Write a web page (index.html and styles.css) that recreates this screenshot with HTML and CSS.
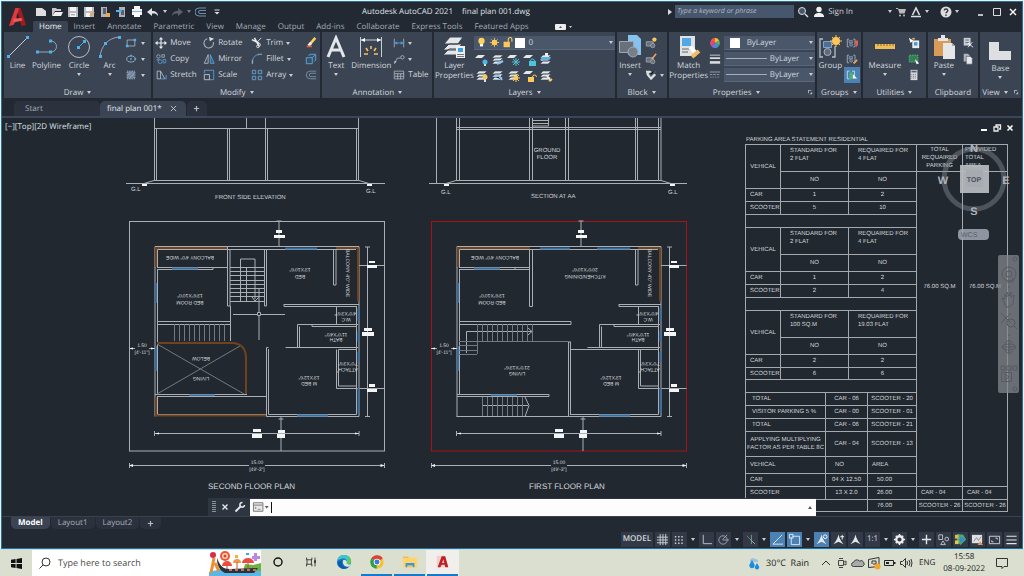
FILE: index.html
```html
<!DOCTYPE html>
<html lang="en">
<head>
<meta charset="utf-8">
<title>Autodesk AutoCAD 2021 - final plan 001.dwg</title>
<link rel="stylesheet" href="styles.css">
</head>
<body>
<svg class="defs" aria-hidden="true">
  <defs>
    <symbol id="sheets" viewBox="0 0 14 14"><path fill="#e4e6e8" stroke="#3b4453" stroke-width=".6" d="M1 11l3-3h8l-3 3zM1 8l3-3h8L9 8zM1 5l3-3h8L9 5z"/></symbol>
    <symbol id="bracket" viewBox="0 0 14 14"><path fill="none" stroke="#aab2bc" d="M3.500 2.500h-2v9h2M8.500 2.500h2v9h-2"/><path fill="#526984" stroke="#8fa5c0" stroke-width=".7" d="M3.500 4h4v3h-4z"/><circle cx="6" cy="9" r="1.800" fill="#526984" stroke="#8fa5c0" stroke-width=".7"/></symbol>
    <symbol id="bigA" viewBox="0 0 14 14"><path fill="#e6e9ec" d="M7 1.500C8 6 10 9.500 12.500 12L7 9.500 1.500 12C4 9.500 6 6 7 1.500z"/></symbol>
  </defs>
</svg>
<div class="app">
  <header class="head">
    <button class="logo" aria-label="Application menu"><svg viewBox="0 0 20 24"><path fill="#9e1c1f" d="M8 2h5l6 19-5 1-3-8z"/><path fill="#e0383b" d="M7 2h4L9 13l-4 8-5 1z"/><path fill="#f0585a" d="M5 14l9-1 1 3-10 2z"/><path fill="#222933" d="M9.500 7l2 6H8z"/></svg></button>
    <div class="head-rows">
      <div class="titlebar">
        <div class="quick">
          <button aria-label="New"><svg viewBox="0 0 12 12"><path fill="#dedede" d="M1 2h6l4 3v5H1z"/></svg></button>
          <button aria-label="Open"><svg viewBox="0 0 12 12"><path fill="#c8c8c8" d="M1 10V2h4l1 1h4v2H4z"/><path fill="#eee" d="M4 6h8l-2 4H1z"/></svg></button>
          <button aria-label="Save"><svg viewBox="0 0 12 12"><path fill="#b9bdc2" d="M1 1h10v10H1z"/><path fill="#f4f4f4" d="M3 1h6v4H3zM3 7h6v4H3z"/><path fill="#666" d="M4 8.500h4v.7H4z"/></svg></button>
          <button aria-label="Save as"><svg viewBox="0 0 12 12"><path fill="#b9bdc2" d="M1 1h10v10H1z"/><path fill="#f4f4f4" d="M3 1h6v4H3zM3 7h4v4H3z"/><path stroke="#e8a860" stroke-width="2" d="M7 10l4-4"/></svg></button>
          <button aria-label="Open from web"><svg viewBox="0 0 12 12"><path fill="#aeb3b9" d="M2 1h6v10H2z"/><path fill="#59616d" d="M4 2h3v6H4z"/><path fill="#efa94a" d="M7 7h4v4H7z"/></svg></button>
          <button aria-label="Save to web"><svg viewBox="0 0 12 12"><path fill="#aeb3b9" d="M4 1h6v10H4z"/><path fill="#59616d" d="M6 4h3v5H6z"/><path fill="#58b2ea" d="M1 4h3V2l3 3-3 3V6H1z"/></svg></button>
          <button aria-label="Plot"><svg viewBox="0 0 12 12"><path fill="#f4f4f4" d="M3 0h6v3H3zM1 3h10v6H1z"/><path fill="#8fb8de" d="M1 5h10v1H1z"/><path fill="#fff" d="M3 7h6v4H3z"/></svg></button>
          <button aria-label="Undo"><svg viewBox="0 0 12 12"><path fill="#e2e4e6" d="M0 6l5-4v3c4 0 6 2 6 5C9 7.500 8 7.500 5 7.500V10z"/></svg></button>
          <i class="caret"></i>
          <button aria-label="Redo"><svg viewBox="0 0 12 12"><path fill="#58616c" d="M12 6L7 2v3c-4 0-6 2-6 5 2-2.500 3-2.500 6-2.500V10z"/></svg></button>
          <i class="caret dim"></i>
          <button aria-label="Offset"><svg viewBox="0 0 12 12"><path fill="none" stroke="#7090b0" d="M11 2H4a4 4 0 000 8h7M11 4.500H5a1.500 1.500 0 000 3h6"/></svg></button>
          <button aria-label="Customize"><svg viewBox="0 0 12 12"><path fill="#ddd" d="M3.500 3.500h5v1h-5zM3.500 6h5L6 8.500z"/></svg></button>
        </div>
        <h1 class="title"><span>Autodesk AutoCAD 2021</span><span>final plan 001.dwg</span></h1>
        <div class="account">
          <i class="caret side"></i>
          <input class="keyword" aria-label="Type a keyword or phrase" placeholder="Type a keyword or phrase">
          <button aria-label="Search"><svg viewBox="0 0 12 12"><circle cx="5" cy="5" r="3.500" fill="#46566c" stroke="#ddd"/><path stroke="#ddd" stroke-width="1.400" d="M8 8l3 3"/></svg></button>
          <button class="sign"><svg viewBox="0 0 12 12"><circle cx="6" cy="3.500" r="2.700" fill="#f0f0f0"/><path fill="#f0f0f0" d="M1 11c0-3 2-4 5-4s5 1 5 4z"/></svg>Sign In</button>
          <i class="caret"></i>
          <button aria-label="Store"><svg viewBox="0 0 12 12"><path fill="#bbb" d="M1 2h2l.5 1H11L9.500 7.500h-5L3 3H1z"/><circle cx="5" cy="9.500" r="1" fill="#bbb"/><circle cx="9" cy="9.500" r="1" fill="#bbb"/></svg></button>
          <button aria-label="Autodesk apps"><svg viewBox="0 0 12 12"><path fill="none" stroke="#ddd" stroke-width="1.600" d="M1 10.500h10M2.500 9L6 2l3.500 7"/></svg></button>
          <i class="caret"></i>
          <button class="help" aria-label="Help"><svg viewBox="0 0 12 12"><circle cx="6" cy="6" r="5.500" fill="#ddd"/><path fill="none" stroke="#333b46" stroke-width="1.400" d="M4.200 4.500c0-2 3.600-2 3.600 0C7.800 6 6 5.700 6 7.300M6 8.500V10"/></svg></button>
          <i class="caret"></i>
        </div>
        <div class="window">
          <button aria-label="Minimize"><svg viewBox="0 0 12 12"><path stroke="#fff" stroke-width="1.400" d="M3 9h5"/></svg></button>
          <button aria-label="Maximize"><svg viewBox="0 0 12 12"><path fill="none" stroke="#ddd" d="M2.500 2.500h7v7h-7z"/></svg></button>
          <button aria-label="Close"><svg viewBox="0 0 12 12"><path stroke="#fff" stroke-width="1.400" d="M3 3l6 6M9 3L3 9"/></svg></button>
        </div>
      </div>
      <nav class="menus">
        <button class="on">Home</button><button>Insert</button><button>Annotate</button><button>Parametric</button><button>View</button><button>Manage</button><button>Output</button><button>Add-ins</button><button>Collaborate</button><button>Express Tools</button><button>Featured Apps</button>
        <button class="mini" aria-label="Minimize ribbon"><svg viewBox="0 0 18 8"><rect y="1" width="11" height="6" rx="1" fill="#eee"/><path fill="#555" d="M4 5h3L5.500 3z"/><path fill="#ccc" d="M14 3h3l-1.500 2z"/></svg></button>
      </nav>
    </div>
  </header>

  <main class="ribbon">
    <section class="panel draw">
      <div class="tools">
        <button class="big"><svg viewBox="0 0 24 24"><path stroke="#ccd1d8" d="M2 22L22 2"/><path fill="#4db1f0" d="M1 20h3v3H1zM20 1h3v3h-3z"/></svg>Line</button>
        <button class="big"><svg viewBox="0 0 24 24"><path fill="none" stroke="#9ba4b2" d="M2 17h14a5.500 5.500 0 000-11"/><path fill="#4db1f0" d="M1 15.500h3v3H1zM14 15.500h3v3h-3zM14 4.500h3v3h-3z"/></svg>Polyline</button>
        <button class="big"><svg viewBox="0 0 24 24"><circle cx="12" cy="12" r="10.500" fill="none" stroke="#b6bdc7"/><path stroke="#4db1f0" d="M12 12l6-6"/><path fill="#4db1f0" d="M10 11h3v3h-3zM16 5h3v3h-3z"/></svg>Circle<i class="caret"></i></button>
        <button class="big"><svg viewBox="0 0 24 24"><path fill="none" stroke="#9ba4b2" d="M2 22C3 11 10 3 21 2"/><path fill="#4db1f0" d="M1 20h3v3H1zM6 7h3v3H6zM20 1h3v3h-3z"/></svg>Arc<i class="caret"></i></button>
        <div class="stack">
          <button aria-label="Rectangle"><svg viewBox="0 0 14 14"><path fill="none" stroke="#aab2bc" d="M2.500 3.500h9v7h-9z"/><path fill="#4db1f0" d="M1 9h3v3H1zM10 2h3v3h-3z"/></svg><i class="caret"></i></button>
          <button aria-label="Ellipse"><svg viewBox="0 0 14 14"><ellipse cx="7" cy="7" rx="5" ry="3.500" fill="none" stroke="#aab2bc"/><path fill="#4db1f0" d="M6 6h2v2H6zM11 6h2v2h-2zM6 2h2v2H6z"/></svg><i class="caret"></i></button>
          <button aria-label="Hatch"><svg viewBox="0 0 14 14"><path fill="#7187a5" d="M3 3h8v8H3z"/><path stroke="#c6ced8" stroke-dasharray="1 1" fill="none" d="M2.500 2.500h9v9h-9zM3 8l5-5M5 11l6-6"/></svg><i class="caret"></i></button>
        </div>
      </div>
      <button class="label">Draw<i class="caret"></i></button>
    </section>

    <section class="panel modify">
      <div class="tools modgrid">
        <button><svg viewBox="0 0 14 14"><path stroke="#e8eaed" stroke-width="1.300" d="M7 2v10M2 7h10"/><path fill="#e8eaed" d="M7 0l2.500 3h-5zM7 14l2.500-3h-5zM0 7l3-2.500v5zM14 7l-3-2.500v5z"/></svg>Move</button>
        <button><svg viewBox="0 0 14 14"><path fill="none" stroke="#aeb7c2" stroke-width="1.300" d="M5 2a5.500 5.500 0 107 4"/><path fill="#ddd" d="M7 0l6 2-5 3z"/></svg>Rotate</button>
        <button><svg viewBox="0 0 14 14"><path stroke="#e8eaed" stroke-width="1.800" d="M4 1l5 9M1 3l8 4"/><path fill="none" stroke="#e8eaed" d="M9 7a2 2 0 110 4zM12 1L7 6"/><circle cx="8" cy="11" r="1.500" fill="none" stroke="#e8eaed"/></svg>Trim<i class="caret"></i></button>
        <button aria-label="Erase"><svg viewBox="0 0 14 14"><path stroke="#ffd05c" stroke-width="3" d="M12 1L6 8"/><path stroke="#f3f3f3" stroke-width="3" d="M7 7l-3 3"/><path stroke="#e25d4e" stroke-width="2" d="M2 11h6"/></svg></button>
        <button><svg viewBox="0 0 14 14"><g fill="none" stroke="#9aabc0"><circle cx="4" cy="4" r="2"/><path d="M8 2h3v3H8zM2 8h3"/></g><g fill="none" stroke="#5799cc"><circle cx="6" cy="10" r="2.300"/><path d="M9.500 7.500h3v4h-3z"/></g></svg>Copy</button>
        <button><svg viewBox="0 0 14 14"><path fill="none" stroke="#b9c0c9" d="M6 2v10H1.500z"/><path fill="#355e85" stroke="#60a5da" d="M8.500 2v10H13z"/></svg>Mirror</button>
        <button><svg viewBox="0 0 14 14"><path fill="none" stroke="#60a5da" d="M2 12V9a7 7 0 017-7"/><path stroke="#aeb7c2" d="M1.500 13V8M8 1.500h5"/></svg>Fillet<i class="caret"></i></button>
        <button aria-label="Explode"><svg viewBox="0 0 14 14"><path fill="#34506b" stroke="#6cacdb" d="M1.500 5.500h7v7h-7zM4 3l2-1.500h6.500V8L11 10M8.500 5.500l3-3"/></svg></button>
        <button><svg viewBox="0 0 14 14"><path fill="none" stroke="#b9c0c9" d="M2.500 2.500h4v9h-4zM6.500 2.500l5 9"/><path fill="none" stroke="#5aa2d8" d="M7 11.500h6V7"/></svg>Stretch</button>
        <button><svg viewBox="0 0 14 14"><path fill="none" stroke="#5aa2d8" d="M1.500 5V1.500h11v11H7"/><path fill="none" stroke="#c6ccd4" d="M1.500 6.500h6v6h-6z"/></svg>Scale</button>
        <button><svg viewBox="0 0 14 14"><path fill="#34506b" stroke="#6fa2ca" d="M1.500 1.500h4v4h-4zM8.500 1.500h4v4h-4zM1.500 8.500h4v4h-4zM8.500 8.500h4v4h-4z"/></svg>Array<i class="caret"></i></button>
        <button aria-label="Offset"><svg viewBox="0 0 14 14"><path fill="none" stroke="#8095ad" d="M13 2.500H6a4.500 4.500 0 000 9h7M13 5H7a2 2 0 000 4h6"/></svg></button>
      </div>
      <button class="label">Modify<i class="caret"></i></button>
    </section>

    <section class="panel annotation">
      <div class="tools">
        <button class="big"><svg viewBox="0 0 24 24"><path fill="none" stroke="#e4e7ea" stroke-width="3" d="M4 22L12 3l8 19M7 15h10"/></svg>Text<i class="caret"></i></button>
        <button class="big"><svg viewBox="0 0 24 24"><path fill="none" stroke="#c9ced6" d="M1.500 2v20M22.500 2v20M2 5h20"/><path fill="#fff" d="M2 5l4-2v4zM22 5l-4-2v4z"/><path stroke="#f5c162" stroke-width="1.600" d="M12 11v3M7 13l2 3M17 13l-2 3M5 19h4M15 19h4"/></svg>Dimension</button>
        <div class="stack">
          <button aria-label="Linear"><svg viewBox="0 0 14 14"><path stroke="#aab2bc" d="M1.500 2v10M12.500 2v10"/><path stroke="#4d9fdd" d="M2 7h10"/><path fill="#4d9fdd" d="M2 7l3-2v4zM12 7L9 5v4z"/></svg><i class="caret"></i></button>
          <button aria-label="Leader"><svg viewBox="0 0 14 14"><path fill="none" stroke="#aab2bc" d="M2 12l3-6h4"/><circle cx="11" cy="5" r="2" fill="none" stroke="#aab2bc"/><path fill="#ccc" d="M1 13l1-4 2 1z"/></svg><i class="caret"></i></button>
          <button><svg viewBox="0 0 14 14"><path fill="none" stroke="#aab2bc" d="M1.500 2.500h11v9h-11zM2 5.500h11M2 8.500h11M5.500 5v7M9 5v7"/></svg>Table</button>
        </div>
      </div>
      <button class="label">Annotation<i class="caret"></i></button>
    </section>

    <section class="panel layers">
      <div class="tools">
        <button class="big"><svg viewBox="0 0 24 24"><path fill="#e4e6e8" stroke="#3b4453" d="M1 20l6-6h13l-5 6zM1 15l6-6h13l-5 6zM2 9l6-7h13l-5 7z"/><path fill="#eee" d="M14 11h9v12h-9z"/><path fill="#3e9fde" d="M16 13h5v4h-5z"/><path stroke="#777" d="M15 19.500h7M15 21.500h7"/></svg>Layer<br>Properties</button>
        <div class="layer-side">
          <div class="combo">
            <svg viewBox="0 0 14 14"><circle cx="7" cy="5" r="4" fill="#ffd35b"/><path fill="#fff" d="M5 9h4v3H5z"/></svg>
            <svg viewBox="0 0 14 14"><circle cx="7" cy="7" r="3.500" fill="#ffc95a"/><path stroke="#ffc95a" d="M7 1v12M1 7h12M3 3l8 8M11 3l-8 8"/></svg>
            <svg viewBox="0 0 14 14"><path fill="#ffc95a" d="M2 6h8v7H2z"/><path fill="none" stroke="#ffc95a" stroke-width="1.400" d="M8 6V3a2.300 2.300 0 014.600 0v3"/></svg>
            <i class="swatch"></i>
            <select aria-label="Layer"><option>0</option></select><i class="caret"></i>
          </div>
          <div class="layer-grid">
            <button aria-label="Off"><svg viewBox="0 0 14 14"><path fill="#e4e6e8" d="M0 5l3-3h7L7 5z"/><circle cx="10" cy="9" r="2.500" fill="#50b7e6"/><path fill="#ddd" d="M9 11h2v2H9z"/></svg></button>
            <button aria-label="Isolate"><svg viewBox="0 0 14 14"><use href="#sheets"/><path stroke="#8dc8f0" stroke-width="2" d="M6 11l6-3"/></svg></button>
            <button aria-label="Freeze"><svg viewBox="0 0 14 14"><path fill="#e4e6e8" d="M0 5l3-3h7L7 5z"/><path stroke="#4fc2d8" d="M9 5v8M5 9h8M6 6l6 6M12 6l-6 6"/></svg></button>
            <button aria-label="Lock"><svg viewBox="0 0 14 14"><path fill="#e4e6e8" d="M0 5l3-3h7L7 5z"/><path fill="#4dc3da" d="M6 8h7v5H6z"/><path fill="none" stroke="#4dc3da" d="M7.500 8a2 2 0 014 0"/></svg></button>
            <button aria-label="Make current"><svg viewBox="0 0 14 14"><use href="#sheets"/><path fill="#5bb0e7" d="M3 4h9l-2 3H1z"/><path fill="#eee" d="M6 0h3v3H6z"/></svg></button>
            <button aria-label="Turn all on"><svg viewBox="0 0 14 14"><use href="#sheets"/><circle cx="10" cy="8" r="2.500" fill="#ffc95a"/><path fill="#ddd" d="M9 10h2v3H9z"/></svg></button>
            <button aria-label="Unisolate"><svg viewBox="0 0 14 14"><use href="#sheets"/><path stroke="#8dc8f0" stroke-width="2" d="M3 7h5l3 4"/></svg></button>
            <button aria-label="Thaw"><svg viewBox="0 0 14 14"><use href="#sheets"/><circle cx="9" cy="9" r="2" fill="#ffc95a"/><path stroke="#ffc95a" d="M9 5v8M5 9h8M6 6l6 6M12 6l-6 6"/></svg></button>
            <button aria-label="Unlock"><svg viewBox="0 0 14 14"><path fill="#e4e6e8" d="M0 5l3-3h7L7 5z"/><path fill="#ffc95a" d="M5 8h6v5H5z"/><path fill="none" stroke="#ffc95a" d="M9.500 8a2 2 0 014 0"/></svg></button>
            <button aria-label="Match layer"><svg viewBox="0 0 14 14"><use href="#sheets"/><path stroke="#eee" stroke-width="2" d="M8 7l4 5"/><path stroke="#ffc95a" stroke-width="2" d="M10 12l3-2"/></svg></button>
          </div>
        </div>
      </div>
      <button class="label">Layers<i class="caret"></i></button>
    </section>

    <section class="panel block">
      <div class="tools">
        <button class="big"><svg viewBox="0 0 24 24"><path fill="#86c2ee" d="M10 0h9l4 4v16H10z"/><path fill="#68707b" stroke="#a0a7b0" d="M1.500 6.500h14v11h-14z"/><circle cx="15" cy="17" r="5" fill="#777f89" stroke="#a0a7b0"/></svg>Insert<i class="caret"></i></button>
        <div class="stack">
          <button aria-label="Create block"><svg viewBox="0 0 14 14"><path fill="#68707b" stroke="#a0a7b0" d="M1.500 5.500h8v5h-8z"/><circle cx="9" cy="10" r="2.500" fill="#68707b" stroke="#a0a7b0"/><circle cx="11" cy="3" r="2.500" fill="#ffc95a"/></svg></button>
          <button aria-label="Edit block"><svg viewBox="0 0 14 14"><path fill="#68707b" stroke="#a0a7b0" d="M1.500 5.500h8v5h-8z"/><circle cx="9" cy="10" r="2.500" fill="#68707b" stroke="#a0a7b0"/><path stroke="#f5a15a" stroke-width="1.800" d="M13 1L8 7"/></svg></button>
          <button aria-label="Edit attributes"><svg viewBox="0 0 14 14"><path fill="#dcdfe2" d="M1 2h5l7 5-6 6-5-6z"/><path stroke="#525a66" stroke-width="1.800" d="M5 5l2 3 6-6"/></svg><i class="caret"></i></button>
        </div>
      </div>
      <button class="label">Block<i class="caret"></i></button>
    </section>

    <section class="panel properties">
      <div class="tools">
        <button class="big"><svg viewBox="0 0 24 24"><path fill="#dfe1e3" d="M3 1h15v20H3z"/><path fill="#50a9e6" d="M5 3h9v8H5z"/><path stroke="#666" d="M5 14h9M5 17h6"/><path stroke="#fff" stroke-width="4" d="M13 12l6 6"/><path stroke="#f3bd5d" stroke-width="4" d="M15 22l7-6"/></svg>Match<br>Properties</button>
        <div class="props">
          <svg viewBox="0 0 14 14"><path fill="#ef5847" d="M7 7V1a6 6 0 00-5 3z"/><path fill="#f6b73c" d="M7 7V1a6 6 0 015 3z"/><path fill="#58b65b" d="M7 7l5-3a6 6 0 010 6z"/><path fill="#3a94dc" d="M7 7l5 3a6 6 0 01-5 3z"/><path fill="#9d60bf" d="M7 7v6a6 6 0 01-5-3z"/><path fill="#dd4c87" d="M7 7l-5 3a6 6 0 010-6z"/></svg>
          <div class="combo color"><i class="swatch"></i><select aria-label="Object color"><option>ByLayer</option></select><i class="caret"></i></div>
          <svg viewBox="0 0 14 14"><path stroke="#dadde0" d="M1 2.500h12"/><path stroke="#dadde0" stroke-width="2" d="M1 6h12"/><path stroke="#dadde0" stroke-width="3" d="M1 11h12"/></svg>
          <div class="combo"><i class="rule"></i><select aria-label="Lineweight"><option>ByLayer</option></select><i class="caret"></i></div>
          <svg viewBox="0 0 14 14"><path stroke="#a0a7b0" d="M1 3.500h12"/><path stroke="#a0a7b0" stroke-dasharray="3 1" d="M1 6.500h12"/><path stroke="#a0a7b0" stroke-dasharray="1 1" d="M1 9.500h12"/></svg>
          <div class="combo"><i class="rule"></i><select aria-label="Linetype"><option>ByLayer</option></select><i class="caret"></i></div>
        </div>
      </div>
      <div class="label-row"><button class="label">Properties<i class="caret"></i></button><button class="launch" aria-label="Open properties palette"><svg viewBox="0 0 6 6"><path fill="#b5bcc6" d="M0 0h4v1H1v3H0zM5 2v3H2z"/></svg></button></div>
    </section>

    <section class="panel groups">
      <div class="tools">
        <button class="big"><svg viewBox="0 0 24 24"><path fill="none" stroke="#b6bdc7" stroke-width="1.300" d="M5 4H2v18h3M14 22h3V11"/><path fill="#536d8c" stroke="#78a4cf" d="M5.500 6.500h8v6h-8z"/><circle cx="9.500" cy="17" r="3.500" fill="#5e6b7d" stroke="#aab2bc"/><circle cx="18" cy="6" r="4" fill="#ffc55a"/><path stroke="#ffc55a" d="M18 0v12M12 6h12M14 2l8 8M22 2l-8 8"/></svg>Group</button>
        <div class="stack">
          <button aria-label="Ungroup"><svg viewBox="0 0 14 14"><use href="#bracket"/><path fill="#e75b55" d="M10 4h4v5l-2 3z"/></svg></button>
          <button aria-label="Group edit"><svg viewBox="0 0 14 14"><use href="#bracket"/><path stroke="#f3a35b" stroke-width="2" d="M9 12l4-4"/></svg></button>
          <button class="lit" aria-label="Group selection"><svg viewBox="0 0 14 14"><path fill="none" stroke="#cfe0ee" d="M4 2.500H1.500v9H4M7 2.500h3v6"/><path fill="#4bb474" d="M4 4h4v8H4z"/><path fill="#fff" d="M8 6l5 5H8z"/></svg></button>
        </div>
      </div>
      <button class="label">Groups<i class="caret"></i></button>
    </section>

    <section class="panel utilities">
      <div class="tools">
        <button class="big"><svg viewBox="0 0 24 24"><path fill="#f0bd59" d="M2 9h20v5H2z"/><path stroke="#8a6a2e" d="M5 9v2M8 9v2M11 9v2M14 9v2M17 9v2M20 9v2"/></svg>Measure<i class="caret"></i></button>
        <div class="stack">
          <button aria-label="Select all"><svg viewBox="0 0 14 14"><path fill="#e9edf1" d="M5 4h8v9H5z"/><path fill="#4799d4" d="M7 6h4v4H7z"/><path fill="#fff" d="M1 1l5 3-3 3z"/><path fill="#f3a35b" d="M5 1h3v2H5z"/></svg></button>
          <button aria-label="Quick select"><svg viewBox="0 0 14 14"><path fill="#357f55" stroke="#55bb81" stroke-dasharray="2 1" d="M1.500 2.500h10v8h-10z"/><path fill="#fff" d="M8 7l5 5-3 1z"/></svg></button>
          <button aria-label="Calculator"><svg viewBox="0 0 14 14"><path fill="#d8dadd" d="M3 1h8v12H3z"/><path fill="#59616c" d="M4 2h6v2H4z"/><path stroke="#59616c" stroke-dasharray="1 1" d="M4 6.500h6M4 8.500h6M4 10.500h6"/></svg></button>
        </div>
      </div>
      <button class="label">Utilities<i class="caret"></i></button>
    </section>

    <section class="panel clipboard">
      <div class="tools">
        <button class="big"><svg viewBox="0 0 24 24"><path fill="#d99b58" d="M2 4h17v17H2z"/><path fill="#e5e6e8" d="M6 6V3h3V0h4v3h3v3zM11 8h9l3 3v13H11z"/><path fill="#aaa" d="M20 8l3 3h-3z"/></svg>Paste<i class="caret"></i></button>
        <div class="stack">
          <button aria-label="Cut"><svg viewBox="0 0 14 14"><path fill="#cbd0d6" d="M2 1h8v9H2z"/><path stroke="#59616c" d="M4 3.500h4M4 6.500h4"/><path stroke="#fff" d="M7 7l6 5M12 6l-5 6"/></svg></button>
          <button aria-label="Copy clip"><svg viewBox="0 0 14 14"><path fill="#aeb4bb" d="M2 1h5l2 2v7H2z"/><path fill="#e6e8ea" stroke="#3b4453" stroke-width=".6" d="M5 4h5l2 2v7H5z"/></svg></button>
        </div>
      </div>
      <div class="label">Clipboard</div>
    </section>

    <section class="panel view">
      <div class="tools">
        <button class="big base"><svg viewBox="0 0 24 24"><path fill="#dddfe2" d="M1 4h10v9h12v9H1z"/></svg>Base<i class="caret"></i></button>
      </div>
      <div class="label-row"><button class="label">View<i class="caret"></i></button><button class="launch" aria-label="Open view settings"><svg viewBox="0 0 6 6"><path fill="#b5bcc6" d="M0 0h4v1H1v3H0zM5 2v3H2z"/></svg></button></div>
    </section>
  </main>

  <nav class="files">
    <button class="file start">Start</button>
    <div class="file on"><button>final plan 001*</button><button class="x" aria-label="Close drawing"><svg viewBox="0 0 8 8"><path stroke="#c8cdd4" d="M1 1l6 6M7 1L1 7"/></svg></button></div>
    <button class="file add" aria-label="New drawing"><svg viewBox="0 0 8 8"><path stroke="#b4bac3" stroke-width="1.400" d="M4 1v6M1 4h6"/></svg></button>
  </nav>

  <div class="canvas">
    <svg class="drawing" viewBox="2 118 1020 397" preserveAspectRatio="xMidYMin meet">
      <defs>
        <!-- dimensions and rooms common to both floors -->
        <g id="floor">
          <g class="ln">
            <path d="M279 221v26M276.500 221h5M276.500 246.500h5M359 265.500h25.500M359 388.500h25.500M367.500 247v169M365 247h5M365 416.500h5M154.500 433.500h204.500M154.500 431v5M359 431v5M281 417v34M278.500 419h5M129 465.500h120M265 465.500h119.500M129.500 463v5M384.500 463v5M129 348.500h6M149 348.500h6"/>
            <path d="M157.500 269.500V394M155 267.500V396M157 267.500h56v2h-56M157 321.500h74M157 324.500h74M359 246.500V416.500H266.500M356.500 306V414.500H268.500V349M333.500 249.500V285h2.500V249.500M336.500 306v9h-2M336.500 315v9M297.500 347v-22.500H358M299.500 347v-20.500M312 324v2.500H357M285.500 347.500H358M336.500 349.500V388.500H359M338.500 349.500V372h-1.500M338.500 349.500h18V386H338.500V372M155 246.500H359M155 246.500V268M157.500 249.500V267M157.500 249.500H356M155 396V416.500M155 394.500h92"/>
          </g>
          <g class="win"><path d="M172 268.500h26M156 283v20M156 346v25M189 395.500h26M297 415.500h31M358.500 308v13M358.500 331v11M358.500 352v10M358.500 388v25"/></g>
          <g class="wood"><path d="M155 248h73M156 247v20M336 248h22M358 248v53"/></g>
          <g class="tag"><path d="M276 230h6v3h-6zM274 235h11v3h-11zM369 261h6v2h-6zM367 265h10v3h-10zM364 328h8v3h-8zM362 332h12v4h-12zM369 384h6v3h-6zM367 389h10v3h-10zM253 429h8v3h-8zM252 434h10v4h-10zM278 430h7v3h-7zM277 434h8v4h-8z"/>
          <path d="M129 465.500l4-1.500v3zM384.500 465.500l-4-1.500v3zM129 348.500l4-1v2zM155 348.500l-4-1v2zM155 433.500l4-1v2zM359 433.500l-4-1v2z"/></g>
        </g>
      </defs>

      <g class="ln">
        <path d="M154.500 118v63M156.500 128v53M154 128.500h205M227.500 129v52M229.500 129v52M246.500 118v10M265.500 118v63M267.500 129v52M356.500 128v53M358.500 118v63M154 180.500h205M126 183.500h259M144 183.500l10-3M369 183.500l-10-3"/>
        <path d="M436.500 118v65M434 183.500h5M456.500 118v63M459.500 118v63M456 127.500h205M456 129.500h205M529.500 118v63M532.500 118v63M565.500 118v63M568.500 118v63M635.500 118v63M637.500 118v63M658.500 118v63M661 118v63M456 180.500h205M429 183.500h258M446 183.500l10-3M671 183.500l-10-3M533 120.500h16M533 123.500h16M548.500 118v8h-16"/>
      </g>
      <path class="tag" d="M142 184h5v2h-5zM367 184h5v2h-5zM444 184h5v2h-5zM670 184h5v2h-5z"/>

      <rect class="ln" x="129.500" y="221.500" width="255" height="229.500"/>
      <rect class="red" x="431.500" y="221.500" width="255" height="229.500"/>
      <use href="#floor"/>
      <use href="#floor" x="302"/>

      <!-- second floor: stairwell, void and balcony -->
      <g class="ln">
        <path d="M227.500 247v59h2.500V249.500M264.500 249.500V306h2V249.500M230 267.500h34M230 271.500h34M230 275.500h34M230 280.500h34M230 284.500h34M230 288.500h34M230 292.500h34M230 296.500h34M230 301.500h34M240.500 301v-42h14.500v40M246.500 267v34M252 297l3 4 4-4M213 267.500h14M284 304.500h75M284 306.500h72M284 304v2.500M230.500 306v35M266.500 416.500V347.500h2M157.500 396.500H266M157.500 396V414.500H266"/>
        <path class="thin" d="M174.500 324v17M179.500 324v17M184.500 324v17M189.500 324v17M194.500 324v17M199.500 324v17M204.500 324v17M209.500 324v17M214.500 324v17M219.500 324v17M224.500 324v17M157 344l87 50M157 394l83-48"/>
        <path d="M233 314.500h24M261 314.500h24M259 288v24M259 316v24M257.500 312.500h3v3h-3z"/>
      </g>
      <g class="wood"><path d="M157 343h77q12 2 12 15v36M156 397v19M155 415.500h111"/></g>
      <path class="win" d="M285 248.500h32"/>

      <!-- first floor: stairs and living room -->
      <g class="ln">
        <path d="M529.500 249v57.500h3V249.500M514.500 267.500h15M514.500 269.500h15M619 304.500h42M619 306.500h40M619 304v2.500M533 321.500h38v3h-38M568.500 342V416.500M570.500 342v73M568 342h3M570 349.500h89M547 394.500h2v2h-92M456.500 416.500h112M466.500 353V331.500H532M528 328l4 3.500-4 3.500M482 405.500h46M525 397l4 8.500-4 11"/>
        <path class="thin" d="M477.500 324v30M482.500 324v17M487.500 324v17M492.500 324v17M497.500 324v17M502.500 324v17M507.500 324v17M512.500 324v17M517.500 324v17M522.500 324v17M527.500 324v17M532.500 324v17M459 341.500h109M459 345.500h18M459 350.500h18M459 354.500h18M482.500 397v19M487.500 397v19M492.500 397v19M497.500 397v19M502.500 397v19M507.500 397v19M512.500 397v19M517.500 397v19M522.500 397v19"/>
      </g>
      <path class="win" d="M540 248.500h30M597 248.500h33"/>

      <g class="cad">
        <text x="131" y="191">G.L</text><text x="366" y="193">G.L</text><text x="215" y="199">FRONT SIDE ELEVATION</text>
        <text x="441" y="194">G.L</text><text x="668" y="194">G.L</text><text x="531" y="198">SECTION AT AA</text>
        <text x="547" y="152" text-anchor="middle">GROUND</text><text x="547" y="159" text-anchor="middle">FLOOR</text>
        <text x="746" y="141">PARKING AREA STATEMENT RESIDENTIAL</text>
      </g>
      <g class="cap"><text x="208" y="489">SECOND FLOOR PLAN</text><text x="529" y="489">FIRST FLOOR PLAN</text></g>
      <g class="dim">
        <text x="257" y="464">15.00</text><text x="257" y="471">[49'-3"]</text><text x="142" y="347">1.50</text><text x="142" y="354">[4'-11"]</text>
        <text x="559" y="464">15.00</text><text x="559" y="471">[49'-3"]</text><text x="444" y="347">1.50</text><text x="444" y="354">[4'-11"]</text>
      </g>
      <g class="room">
        <text transform="translate(190 256) rotate(180)">BALCONY 4'0" WIDE</text>
        <text transform="translate(190 301) rotate(180)">BED ROOM</text><text transform="translate(190 294) rotate(180)">13'6"X10'0"</text>
        <text transform="translate(300 275) rotate(180)">BED</text><text transform="translate(300 268) rotate(180)">13'X10'6"</text>
        <text transform="translate(346 273) rotate(90)">BALCONY 4'0" WIDE</text>
        <text transform="translate(346 318) rotate(180)">W.C</text><text transform="translate(346 312) rotate(180)">4'0"X3'6"</text>
        <text transform="translate(336 338) rotate(180)">BATH</text><text transform="translate(336 333) rotate(180)">11'0"X4'0"</text>
        <text transform="translate(348 368) rotate(180)">ATTACH</text><text transform="translate(348 362) rotate(180)">7'0"X3'6"</text>
        <text transform="translate(309 382) rotate(180)">M BED</text><text transform="translate(309 376) rotate(180)">13'X12'6"</text>
        <text transform="translate(201 357) rotate(180)">BELOW</text><text transform="translate(201 377) rotate(180)">LIVING</text>
        <text transform="translate(495 256) rotate(180)">BALCONY 4'0" WIDE</text>
        <text transform="translate(492 301) rotate(180)">BED ROOM</text><text transform="translate(492 294) rotate(180)">13'6"X10'0"</text>
        <text transform="translate(585 275) rotate(180)">KITCHEN/DINING</text><text transform="translate(585 268) rotate(180)">20'0"X10'6"</text>
        <text transform="translate(648 273) rotate(90)">BALCONY 4'0" WIDE</text>
        <text transform="translate(648 318) rotate(180)">W.C</text><text transform="translate(648 312) rotate(180)">4'0"X3'6"</text>
        <text transform="translate(638 338) rotate(180)">BATH</text><text transform="translate(638 333) rotate(180)">11'0"X4'0"</text>
        <text transform="translate(650 368) rotate(180)">ATTACH</text><text transform="translate(650 362) rotate(180)">7'0"X3'6"</text>
        <text transform="translate(611 382) rotate(180)">M BED</text><text transform="translate(611 376) rotate(180)">13'X12'6"</text>
        <text transform="translate(517 372) rotate(180)">LIVING</text><text transform="translate(517 366) rotate(180)">21'0"X13'6"</text>
      </g>

      <foreignObject x="745" y="144" width="264" height="372">
        <table class="parking">
          <colgroup><col class="c35"><col class="c45"><col class="c23"><col class="c19"><col class="c49"><col class="c46"><col class="c45"></colgroup>
          <tr class="h27"><th rowspan="2">VEHICAL</th><th colspan="2" class="lead">STANDARD FOR<br>2 FLAT</th><th colspan="2" class="lead">REQUAIRED FOR<br>4 FLAT</th><th class="tot">TOTAL<br>REQUAIRED<br>PARKING</th><th class="lead2">PROVIDED<br>TOTAL<br>AREA</th></tr>
          <tr class="h17"><td colspan="2">NO</td><td colspan="2">NO</td><td rowspan="20" class="area">76.00 SQ.M</td><td rowspan="20" class="area">76.00 SQ.M</td></tr>
          <tr class="h13"><td class="l">CAR</td><td colspan="2">1</td><td colspan="2">2</td></tr>
          <tr class="h13"><td class="l">SCOOTER</td><td colspan="2">5</td><td colspan="2">10</td></tr>
          <tr class="h13"><td colspan="5"></td></tr>
          <tr class="h27"><th rowspan="2">VEHICAL</th><th colspan="2" class="lead">STANDARD FOR<br>2 FLAT</th><th colspan="2" class="lead">REQUAIRED FOR<br>4 FLAT</th></tr>
          <tr class="h17"><td colspan="2">NO</td><td colspan="2">NO</td></tr>
          <tr class="h13"><td class="l">CAR</td><td colspan="2">1</td><td colspan="2">2</td></tr>
          <tr class="h13"><td class="l">SCOOTER</td><td colspan="2">2</td><td colspan="2">4</td></tr>
          <tr class="h13"><td colspan="5"></td></tr>
          <tr class="h27"><th rowspan="2">VEHICAL</th><th colspan="2" class="lead">STANDARD FOR<br>100 SQ.M</th><th colspan="2" class="lead">REQUAIRED FOR<br>19.03 FLAT</th></tr>
          <tr class="h17"><td colspan="2">NO</td><td colspan="2">NO</td></tr>
          <tr class="h13"><td class="l">CAR</td><td colspan="2">2</td><td colspan="2">2</td></tr>
          <tr class="h12"><td class="l">SCOOTER</td><td colspan="2">6</td><td colspan="2">6</td></tr>
          <tr class="h13"><td colspan="5"></td></tr>
          <tr class="h13"><td colspan="2" class="l in">TOTAL</td><td colspan="2">CAR - 06</td><td>SCOOTER - 20</td></tr>
          <tr class="h13"><td colspan="2" class="l in">VISITOR PARKING 5 %</td><td colspan="2">CAR - 00</td><td>SCOOTER - 01</td></tr>
          <tr class="h13"><td colspan="2" class="l in">TOTAL</td><td colspan="2">CAR - 06</td><td>SCOOTER - 21</td></tr>
          <tr class="h25"><td colspan="2">APPLYING MULTIPLYING<br>FACTOR AS PER TABLE 8C</td><td colspan="2">CAR - 04</td><td>SCOOTER - 13</td></tr>
          <tr class="h17"><td colspan="2" class="l">VEHICAL</td><td colspan="2" class="l wide">NO</td><td class="l">AREA</td></tr>
          <tr class="h13"><td colspan="2" class="l">CAR</td><td colspan="2">04 X 12.50</td><td class="l wide">50.00</td></tr>
          <tr class="h13"><td colspan="2" class="l">SCOOTER</td><td colspan="2">13 X 2.0</td><td class="l wide">26.00</td><td class="l">CAR - 04</td><td class="l">CAR - 04</td></tr>
          <tr class="h12"><td colspan="4"></td><td class="l wide">76.00</td><td>SCOOTER - 26</td><td>SCOOTER - 26</td></tr>
        </table>
      </foreignObject>

      <!-- view cube -->
      <circle cx="974" cy="179" r="30" fill="none" stroke="#8b929c" stroke-opacity=".42" stroke-width="5"/>
      <path fill="#b9bcc0" fill-opacity=".92" d="M960 165h29v28h-29z"/><path fill="#a6aab1" d="M966 170h17v17h-17z"/>
      <g class="cube"><text x="974" y="152">N</text><text x="943" y="184">W</text><text x="1006" y="184">E</text><text x="974" y="215">S</text></g>
      <text class="top" x="974" y="182">TOP</text>
      <rect x="958" y="229" width="31" height="11" rx="4" fill="#a2a8b4" fill-opacity=".85"/><text class="wcs" x="961" y="237">WCS</text>

      <!-- navigation bar -->
      <rect x="998" y="255" width="21" height="138" rx="2" fill="#81858c" fill-opacity=".75"/>
      <g fill="none" stroke="#565b63">
        <circle cx="1015" cy="259" r="2"/><circle cx="1009" cy="274" r="7"/><circle cx="1009" cy="274" r="3"/><path d="M1013 278v4h-6M1009 286v2"/>
        <path d="M1004 302l-2-4 3 1v-5l2 3v-5l2 4 2-4v5l3-2-1 9-4 3h-3zM1001 313l10 10M1011 313l-10 10"/><circle cx="1011" cy="323" r="4"/><path d="M1014 326l3 3M1009 334v2M1002 347h14M1009 340v14M1005 343l4-3 4 3M1005 351l4 3 4-3"/><ellipse cx="1009" cy="347" rx="7" ry="3"/><path d="M1001 366h4v4h-4zM1007 366h4v4h-4zM1013 366h4v4h-4zM1001.500 372.500h10v9h-10zM1005 374l4 3-4 3z"/><circle cx="1015" cy="389" r="2"/>
      </g>
    </svg>

    <div class="viewport"><button>[−]</button><button>[Top]</button><button>[2D Wireframe]</button></div>
    <div class="window view-window">
      <button aria-label="Minimize drawing"><svg viewBox="0 0 12 12"><path stroke="#fff" stroke-width="2" d="M3 8h6"/></svg></button>
      <button aria-label="Restore drawing"><svg viewBox="0 0 12 12"><path fill="none" stroke="#eee" stroke-width="1.300" d="M3 5h4v4H3zM5 4.500V3h4.500v4H8"/></svg></button>
      <button aria-label="Close drawing"><svg viewBox="0 0 12 12"><path stroke="#fff" stroke-width="1.600" d="M3.500 3.500l5 5M8.500 3.500l-5 5"/></svg></button>
    </div>
    <div class="command">
      <i class="grip"></i>
      <button aria-label="Close command line"><svg viewBox="0 0 12 12"><path stroke="#e4e6e8" stroke-width="1.400" d="M3.500 3.500l5 5M8.500 3.500l-5 5"/></svg></button>
      <button aria-label="Customize command line"><svg viewBox="0 0 12 12"><path stroke="#e4e6e8" stroke-width="2" d="M1.500 10.500L7 5"/><path fill="none" stroke="#e4e6e8" stroke-width="1.600" d="M8.500 1.500a2.300 2.300 0 102 2.500"/></svg></button>
      <label class="entry"><svg viewBox="0 0 20 12"><path fill="#e8e8e8" stroke="#777" d="M1.500 1.500h10v9h-10zM2 4h9"/><path fill="none" stroke="#777" stroke-width=".8" d="M3 6l1.500 1L3 8M6 8.500h3"/><path fill="#555" d="M13.500 5h4l-2 2.500z"/></svg><i class="cursor"></i><input aria-label="Command"><i class="caret up"></i></label>
    </div>
  </div>

  <footer>
    <nav class="layouts"><button class="on">Model</button><button>Layout1</button><button>Layout2</button><button class="plus" aria-label="New layout"><svg viewBox="0 0 8 8"><path stroke="#b4bac3" stroke-width="1.400" d="M4 1v6M1 4h6"/></svg></button></nav>
    <div class="status">
      <button class="modelspace">MODEL</button>
      <button aria-label="Grid"><svg viewBox="0 0 14 14"><path stroke="#cfd4da" d="M4.500 1v12M7.500 1v12M10.500 1v12M1 4.500h12M1 7.500h12M1 10.500h12"/></svg></button>
      <button aria-label="Snap"><svg viewBox="0 0 14 14"><path stroke="#cfd4da" stroke-width="1.500" stroke-dasharray="1.500 2" d="M2 4h10M2 7.500h10M2 11h10"/></svg></button><i class="caret"></i>
      <button aria-label="Ortho"><svg viewBox="0 0 14 14"><path fill="none" stroke="#c0c6cd" d="M3.500 2v9.500H13"/></svg></button>
      <button aria-label="Polar"><svg viewBox="0 0 14 14"><circle cx="6.500" cy="7.500" r="4.500" fill="none" stroke="#9ca5b0"/><path stroke="#9ca5b0" d="M6 7.500h7M6 7l5-5"/></svg></button><i class="caret"></i>
      <button aria-label="Isodraft"><svg viewBox="0 0 14 14"><path stroke="#5aa98b" d="M8 2v10"/><path stroke="#bb6262" d="M3 3l5 5"/><path stroke="#aaa" d="M7 7l5 5"/></svg></button><i class="caret"></i>
      <button class="lit" aria-label="Object tracking"><svg viewBox="0 0 14 14"><path fill="none" stroke="#dce9f5" d="M12 2L2 12h11"/></svg></button>
      <button class="lit" aria-label="Object snap"><svg viewBox="0 0 14 14"><path fill="none" stroke="#dce9f5" d="M4.500 3.500h8v9h-9v-8"/><path fill="none" stroke="#dce9f5" d="M1.500 1.500h4v4h-4z"/></svg></button><i class="caret"></i>
      <button class="lit" aria-label="Annotation visibility"><svg viewBox="0 0 14 14"><use href="#bigA"/><circle cx="11" cy="4" r="2" fill="none" stroke="#fff"/></svg></button>
      <button aria-label="Auto scale"><svg viewBox="0 0 14 14"><use href="#bigA"/><path stroke="#fff" d="M11 2v5M9 4h4"/></svg></button>
      <button aria-label="Annotation scale"><svg viewBox="0 0 14 14"><use href="#bigA"/></svg></button>
      <button class="scale">1:1</button><i class="caret"></i>
      <button aria-label="Workspace"><svg viewBox="0 0 14 14"><circle cx="7" cy="7" r="3.500" fill="none" stroke="#eee" stroke-width="2.500"/><path stroke="#eee" stroke-width="1.600" d="M7 1v2M7 11v2M1 7h2M11 7h2M3 3l1 1M10 10l1 1M11 3l-1 1M3 11l1-1"/></svg></button><i class="caret"></i>
      <button aria-label="Annotation monitor"><svg viewBox="0 0 14 14"><path stroke="#e4e6e8" stroke-width="1.500" d="M7 2v10M2 7h10"/></svg></button>
      <button aria-label="Isolate objects"><svg viewBox="0 0 14 14"><g fill="none" stroke="#c0c6cd"><path d="M2 2h4v5H2zM4 12.500l2.500-4 2.500 4z"/><circle cx="10.500" cy="6.500" r="2"/></g></svg></button>
      <button aria-label="Graphics performance"><svg viewBox="0 0 14 14"><path fill="#44ad77" d="M3 1l7 1 3 5-6 6-4-4z"/><path fill="#3b87d3" d="M6 4l6 2-5 5z"/><path fill="#efb04b" d="M1 2h4v4H1z"/><path fill="#e6c553" d="M1 8h4v4H1z"/></svg></button>
      <button aria-label="Hardware"><svg viewBox="0 0 14 14"><path fill="#dee0e2" d="M1 2h11v9H1z"/><path fill="none" stroke="#888" d="M3 9l3-4 2 3 3-4"/><path fill="#ee905a" d="M10 9l3 4H7z"/></svg></button>
      <button class="clean" aria-label="Clean screen"><svg viewBox="0 0 14 14"><path fill="none" stroke="#cfd4da" d="M1.500 3.500h11v8h-11zM4 8v1.500h2M8 5.500h2V7"/></svg></button>
      <button aria-label="Customize status bar"><svg viewBox="0 0 14 14"><path stroke="#e4e6e8" stroke-width="1.200" d="M1.500 3.500h11M1.500 7.500h11M1.500 11.500h11"/></svg></button>
    </div>
  </footer>
</div>

<div class="taskbar">
  <button class="win-start" aria-label="Start"><svg viewBox="0 0 12 12"><path fill="#111" d="M0 2l5-1v4.500H0zM6 1l6-1v5.500H6zM0 6.500h5V11l-5-1zM6 6.500h6V12l-6-1z"/></svg></button>
  <label class="search"><svg class="lens" viewBox="0 0 12 12"><circle cx="7" cy="5" r="4" fill="none" stroke="#333"/><path stroke="#333" d="M4 8l-3.500 3.500"/></svg><input placeholder="Type here to search" aria-label="Type here to search">
    <svg class="art" viewBox="0 0 52 26" preserveAspectRatio="none"><path fill="#5bb7e8" d="M0 22l12-3 15 2 25-2v7H0z"/><path fill="#6bb344" d="M36 14l8 1 8-2v8H34z"/><path fill="#253442" d="M8 8c3 8 6 11 13 11l28-1-4 5H16c-6-3-8-8-8-15z"/><circle cx="16" cy="6" r="5" fill="#ef5739"/><circle cx="16" cy="6" r="3" fill="#fbd5b5"/><circle cx="16" cy="6" r="1.500" fill="#d94332"/><path fill="#e94e40" d="M13 16a5 5 0 0110 0zM33 13a6 5 0 0112 0z"/><path fill="#f09a45" d="M24 13a4 4 0 018 0z"/><path stroke="#b85035" d="M18 15v4M28 12v7M39 13v6"/><path stroke="#ee8e32" stroke-width="3" d="M5 8L2 23M6 13l4 8"/><circle cx="4" cy="5" r="3" fill="#dc2b48"/><path fill="#bd86e3" d="M45 3h3v3h3v3h-3v2h-3V9h-2V6h2z"/><path fill="#3fa9e3" d="M37 3h3v2h-3z"/><path fill="#efb13a" d="M26 5h3v3h-3z"/><path stroke="#e46a3c" stroke-width="2" stroke-dasharray="3 3" d="M20 20h27"/></svg>
  </label>
  <div class="pins">
    <button aria-label="Cortana"><svg viewBox="0 0 18 18"><circle cx="9" cy="9" r="4.500" fill="none" stroke="#111" stroke-width="1.600"/></svg></button>
    <button aria-label="Task view"><svg viewBox="0 0 18 18"><path fill="none" stroke="#333" d="M4 4v2.500h6V4M4 14v-2.500h6V14M4.500 6v6M9.500 6v6M13.500 4v10"/><path fill="#333" d="M12.500 7h2v3h-2z"/></svg></button>
    <button aria-label="Edge"><svg viewBox="0 0 18 18"><circle cx="9" cy="9" r="8" fill="#1878c7"/><path fill="#3ec5c8" d="M1.500 8C2 3 5 1 9 1c5 0 8 3 8 7 0 3-2 4-5 3 1-4-1-6-4-6-3 0-5 1-6.500 3z"/><path fill="#68c84c" d="M13 3c3 1 4 3 4 5 0 3-2 4-5 3 2-3 2-6 1-8z"/><path fill="#0c5ba6" d="M7 7c-2 5 1 9 7 8-5 4-12 0-12-5 1-2 3-3 5-3z"/><path fill="#dde8d8" d="M8 7c3-1 5 1 4 4 2 1 4 1 5 0-1 3-3 4-5 3-3 0-5-4-4-7z"/></svg></button>
    <button class="open" aria-label="Chrome"><svg viewBox="0 0 18 18"><circle cx="9" cy="9" r="7.500" fill="#f4c430"/><path fill="#dd4034" d="M9 9L2.500 5.200A7.500 7.500 0 0115.500 5z"/><path fill="#2e9e50" d="M9 9L2.500 5.200A7.500 7.500 0 008.500 16.500z"/><circle cx="9" cy="9" r="3.700" fill="#fff"/><circle cx="9" cy="9" r="2.800" fill="#3878e8"/></svg></button>
    <button class="open" aria-label="File Explorer"><svg viewBox="0 0 18 18"><path fill="#e8a72c" d="M1 3h6l1 2H1z"/><path fill="#ffd56a" d="M1 4h16v11H1z"/><path fill="#3d96d8" d="M4 10h10v5h-2v-2H6v2H4z"/><path fill="#f6c254" d="M7 13h4v2H7z"/></svg></button>
    <button class="open active" aria-label="AutoCAD"><svg viewBox="0 0 18 18"><path fill="#efd0cc" d="M2 2h9v13H2z"/><path fill="#bf2026" d="M7.500 2.500h4L15 15h-3.500l-.7-3H7.500L6 15H3zM9.300 6l-1.300 4h2.500z"/></svg></button>
  </div>
  <div class="tray">
    <button class="weather"><svg viewBox="0 0 14 14"><path fill="#9fc4df" d="M3 6a3 3 0 015-3 2.500 2.500 0 013 3z"/><path fill="#1c8cde" d="M5 4l2.500 4.500a2.700 2.700 0 11-5 0zM10 7l2 3.500a2.200 2.200 0 11-4 0z"/></svg>30°C&nbsp; Rain</button>
    <button aria-label="Show hidden icons"><svg viewBox="0 0 14 14"><path fill="none" stroke="#333" d="M3 9l4-4 4 4"/></svg></button>
    <button aria-label="Meet now"><svg viewBox="0 0 14 14"><path fill="none" stroke="#444" d="M3.500 4.500h5v5h-5zM9 6l2-1v4L9 8M4 2.500h4M4 11.500h4"/></svg></button>
    <button aria-label="OneDrive"><svg viewBox="0 0 14 14"><path fill="#aaa" stroke="#444" d="M2.500 10.500a2 2 0 010-4 3.500 3.500 0 016-1.500 3 3 0 013 5.500z"/></svg></button>
    <button aria-label="Update"><svg viewBox="0 0 14 14"><path fill="none" stroke="#333" d="M1.500 3.500L12 1.500v9l-10.500 1zM5 8V5h4M9 5v3H6"/><circle cx="10.500" cy="10.500" r="3" fill="#f5a52a"/></svg></button>
    <button aria-label="Battery"><svg viewBox="0 0 14 14"><path fill="none" stroke="#222" d="M1.500 4.500h9v5h-9z"/><path fill="#222" d="M3 6h3v2H3zM11 6h1.500v2H11z"/></svg></button>
    <button aria-label="Volume"><svg viewBox="0 0 14 14"><path fill="none" stroke="#333" d="M1.500 5.500h2l3-3v9l-3-3h-2zM8 5q1 2 0 4M10 4q2 3 0 6M12 3q2 4 0 8"/></svg></button>
    <button class="lang">ENG</button>
    <button class="clock">15:58<br>08-09-2022</button>
    <button class="note" aria-label="Notifications"><svg viewBox="0 0 14 14"><path fill="none" stroke="#333" d="M1.500 2.500h11v8H9l-2 2v-2H1.500z"/></svg></button>
  </div>
</div>
</body>
</html>
```

FILE: styles.css
```css
* { box-sizing: border-box; }
html, body { height: 100%; margin: 0; }
body {
  display: flex;
  flex-direction: column;
  overflow: hidden;
  background: #eef1f4;
  color: #d3d7dc;
  font: 8px/10px "Open Sans", "Noto Sans", sans-serif;
  text-rendering: geometricPrecision;
}
button, input, select { font: inherit; color: inherit; background: none; border: 0; padding: 0; margin: 0; border-radius: 0; text-rendering: inherit; }
button { display: inline-flex; align-items: center; justify-content: center; white-space: nowrap; }
input, select { min-width: 0; outline: 0; appearance: none; }
svg { display: block; flex: none; width: 14px; height: 14px; }
svg.defs { position: absolute; width: 0; height: 0; }

.caret { flex: none; border: 2px solid transparent; border-top: 3px solid #c9cdd3; border-bottom: 0; width: 4px; height: 3px; }
.caret.dim { border-top-color: #777f89; }
.caret.side { border: 3px solid transparent; border-left: 4px solid #ddd; border-right: 0; height: 6px; }
.caret.up { border-top: 0; border-bottom: 3px solid #555; }

.app {
  flex: 1;
  min-height: 0;
  display: flex;
  flex-direction: column;
  margin: 1px 1px 0 1px;
  border: 1px solid #237497;
  background: #222933;
}

/* title bar and menus */
.head { display: flex; height: 30px; flex: none; }
.logo { width: 31px; flex: none; }
.logo svg { width: 18px; height: 22px; }
.head-rows { flex: 1; min-width: 0; display: flex; flex-direction: column; justify-content: space-between; }
.titlebar { display: flex; align-items: center; height: 19px; }
.titlebar svg { width: 12px; height: 12px; }
.quick { display: flex; align-items: center; gap: 4px; width: 194px; flex: none; padding-left: 2px; }
.title { flex: 1; margin: 0; padding-left: 135px; display: flex; gap: 9px; font-size: 8px; font-weight: 400; white-space: nowrap; color: #dfe2e6; }
.account { display: flex; align-items: center; gap: 3px; }
.keyword { width: 119px; height: 13px; padding: 0 2px; background: #46566c; font-style: italic; font-size: 7px; }
.keyword::placeholder { color: #b1bac6; opacity: 1; }
.sign { gap: 3px; margin: 0 32px 0 1px; }
.help { margin-left: 8px; }
.window { display: flex; gap: 4px; }
.titlebar .window { margin: 0 3px 0 16px; }
.menus { display: flex; height: 11px; }
.menus button { padding: 0 6px; color: #a4abb5; }
.menus .on { background: #3b4453; color: #eef0f2; border-radius: 2px 2px 0 0; }
.menus .mini { margin-left: 14px; }
.mini svg { width: 18px; height: 8px; }

/* ribbon */
.ribbon { display: flex; gap: 2px; height: 66px; flex: none; padding: 0 1px 0 2px; }
.panel { display: flex; flex-direction: column; min-width: 0; background: #3b4453; }
.draw { flex: 147 1 0; } .modify { flex: 167 1 0; } .annotation { flex: 110 1 0; } .layers { flex: 180 1 0; } .block { flex: 50 1 0; }
.properties { flex: 146 1 0; } .groups { flex: 44 1 0; } .utilities { flex: 63 1 0; } .clipboard { flex: 50 1 0; } .view { flex: 41 1 0; }
.tools { flex: 1; display: flex; padding-top: 3px; min-width: 0; }
.big { flex-direction: column; justify-content: flex-start; flex: none; gap: 0; }
.big svg { width: 24px; height: 24px; margin-bottom: 2px; }
.big .caret { margin-top: 2px; }
.stack { display: flex; flex-direction: column; }
.stack button { height: 16px; justify-content: flex-start; gap: 4px; }
.stack svg, .modgrid svg { width: 12px; height: 12px; }
.label, .label-row { height: 11px; display: flex; align-items: center; justify-content: center; gap: 4px; }
.label-row { width: 100%; }
.label-row .label { flex: 1; }
.launch { margin-right: 2px; }
.launch svg { width: 5px; height: 5px; }
.draw .big { width: 27px; }
.draw .big:nth-child(2) { width: 31px; }
.draw .big:nth-child(3) { width: 34px; }
.draw .stack { padding-left: 2px; }
.modgrid { display: grid; grid-template-columns: 48px 48px 54px 14px; grid-auto-rows: 16px; padding-left: 2px; }
.modgrid button { justify-content: flex-start; gap: 3px; }
.annotation .big { width: 28px; }
.annotation .big:nth-child(2) { width: 42px; }
.annotation .stack { padding-left: 1px; }
.annotation .stack button { gap: 3px; }
.layers .big { width: 40px; }
.layer-side { flex: 1; min-width: 0; display: flex; flex-direction: column; gap: 2px; padding-top: 1px; }
.layer-grid { display: grid; grid-template-columns: repeat(5, 16px); grid-auto-rows: 16px; }
.combo { display: flex; align-items: center; gap: 2px; height: 14px; min-width: 0; padding: 0 2px; background: #4a576b; border-bottom: 1px solid #5a6679; }
.combo svg { width: 11px; height: 11px; }
.combo select { flex: 1; padding-left: 1px; }
.swatch { width: 10px; height: 10px; background: #fff; flex: none; }
.block .big { width: 27px; }
.block .stack { padding-left: 1px; }
.block .stack button { gap: 3px; }
.properties .big { width: 40px; }
.props { flex: 1; min-width: 0; display: grid; grid-template-columns: 12px 1fr; grid-auto-rows: 14px; gap: 2px 3px; align-items: center; padding-top: 1px; }
.props > svg { width: 12px; height: 12px; }
.props .combo { padding-left: 2px; }
.rule { flex: 1; height: 1px; background: #a4adb9; }
.props .combo select { flex: none; width: 38px; }
.props .color { padding-left: 6px; gap: 6px; }
.props .color select { flex: 1; }
.groups .big { width: 27px; }
.groups .stack button { width: 16px; padding-left: 2px; }
.lit { background: #4c81b3; }
.utilities .big { width: 44px; }
.utilities .stack { padding-left: 1px; }
.clipboard .big { width: 32px; }
.clipboard .stack { padding-left: 2px; }
.view .tools { justify-content: center; }
.base { padding-top: 3px; }

/* drawing tabs */
.files { display: flex; align-items: flex-end; height: 20px; flex: none; padding-left: 12px; border-bottom: 2px solid #3c465b; }
.file { height: 15px; background: #2b323e; color: #a7aeb8; border-radius: 5px 5px 0 0; }
.start { width: 86px; justify-content: flex-start; padding-left: 11px; }
.file.on { display: flex; align-items: center; gap: 8px; padding: 0 9px 0 7px; background: #3b4453; color: #e4e7ea; }
.x svg, .add svg, .plus svg { width: 7px; height: 7px; }
.add { width: 20px; margin-left: 1px; }

/* model space */
.canvas { position: relative; flex: 1; min-height: 0; background: #212830; }
.drawing { width: 100%; height: 100%; overflow: hidden; }
.ln { fill: none; stroke: #aaafb5; stroke-width: 1; }
.thin { stroke: #727981; }
.red { fill: none; stroke: #a51319; }
.win { fill: none; stroke: #356d9e; stroke-width: 2; }
.wood { fill: none; stroke: #70431c; stroke-width: 2; }
.tag { fill: #f4f5f6; }
.cad, .cap, .dim, .room { fill: #d6d9dc; font-family: "Liberation Sans", Arial, sans-serif; }
.cad { font-size: 6px; }
.cap { font-size: 8px; }
.dim { font-size: 5px; text-anchor: middle; }
.room { font-size: 5px; text-anchor: middle; }
.cube { fill: #aeb3b9; font: bold 11px "Liberation Sans", Arial, sans-serif; text-anchor: middle; }
.top { fill: #4c525b; font: bold 7px "Liberation Sans", Arial, sans-serif; text-anchor: middle; }
.wcs { fill: #596070; font: 7px "Liberation Sans", Arial, sans-serif; }

.parking { width: 263px; table-layout: fixed; border-collapse: collapse; color: #d6d9dc; font: 6px/8px "Liberation Sans", Arial, sans-serif; white-space: nowrap; }
.parking th, .parking td { padding: 0; border: 1px solid #a4a9af; font-weight: 400; text-align: center; overflow: visible; line-height: 8px; }
.c35 { width: 35px; } .c45 { width: 45px; } .c23 { width: 23px; } .c19 { width: 19px; } .c49 { width: 49px; } .c46 { width: 46px; }
.h12 { height: 12px; } .h13 { height: 13px; } .h17 { height: 17px; } .h25 { height: 25px; } .h27 { height: 27px; }
.parking .lead { text-align: left; padding-left: 9px; vertical-align: top; padding-top: 2px; }
.parking .lead2 { text-align: left; padding-left: 2px; }
.parking .area { vertical-align: top; padding-top: 111px; }
.parking .l { text-align: left; padding-left: 4px; }
.parking .in { padding-left: 6px; }
.parking .wide { padding-left: 9px; }

.viewport { position: absolute; left: 3px; top: 4px; display: flex; color: #dfe2e5; font-size: 8px; }
.view-window { position: absolute; right: 6px; top: 4px; gap: 1px; }
.view-window svg { width: 12px; height: 12px; }
.command { position: absolute; left: 206px; right: 206px; bottom: 0; height: 18px; display: flex; align-items: center; gap: 3px; padding-left: 4px; background: #2d3541; }
.command svg { width: 12px; height: 12px; }
.grip { width: 4px; height: 12px; background: repeating-linear-gradient(#8b929b 0 1px, transparent 1px 2px); }
.entry { flex: 1; height: 17px; margin-left: 1px; display: flex; align-items: center; padding: 0 4px 0 2px; background: #fdfdfd; color: #111; }
.entry svg { width: 19px; }
.entry input { flex: 1; }
.cursor { width: 1px; height: 11px; background: #111; }

/* layout tabs and status bar */
footer { flex: none; height: 32px; border-top: 1px solid #3a414c; display: flex; flex-direction: column; justify-content: space-between; }
.layouts { display: flex; padding-left: 9px; gap: 1px; height: 12px; }
.layouts button { padding: 0 7px; background: #2b323e; color: #a7aeb8; border-radius: 0 0 5px 5px; }
.layouts .on { background: #3b4453; color: #fff; font-weight: 700; }
.status { display: flex; justify-content: flex-end; align-items: center; height: 17px; gap: 2px; padding: 0 3px 1px 0; }
.status button { height: 15px; min-width: 15px; background-color: #323a47; }
.status svg { width: 13px; height: 13px; }
.status .lit { background-color: #4c81b3; }
.status .caret { margin: 0 2px; }
.status .modelspace { padding: 0 2px; font-weight: 600; }

/* taskbar */
.taskbar { display: flex; align-items: stretch; flex: none; height: 27px; background: #dbdfcf; color: #222; border-top: 1px solid #c6dbe4; }
.win-start { width: 32px; flex: none; }
.win-start svg { width: 11px; height: 11px; }
.search { display: flex; align-items: center; width: 229px; flex: none; background: #fff; padding-left: 7px; gap: 7px; }
.search .lens { width: 12px; height: 12px; }
.search input { flex: 1; font-size: 9px; }
.search input::placeholder { color: #4a4a4a; opacity: 1; }
.search .art { width: 52px; height: 26px; }
.pins { display: flex; }
.pins button { width: 33px; border-bottom: 2px solid transparent; }
.pins svg { width: 16px; height: 16px; }
.pins .open { border-image: linear-gradient(90deg, transparent 9%, #1679cc 9% 91%, transparent 91%) 2; }
.pins .active { background: #f1efec; }
.tray { margin-left: auto; display: flex; align-items: center; gap: 2px; padding-right: 15px; }
.weather { gap: 5px; font-size: 9px; margin-right: 8px; }
.lang { margin-left: 4px; }
.clock { font-size: 8px; line-height: 12px; text-align: center; margin: 0 8px 0 6px; }
```
